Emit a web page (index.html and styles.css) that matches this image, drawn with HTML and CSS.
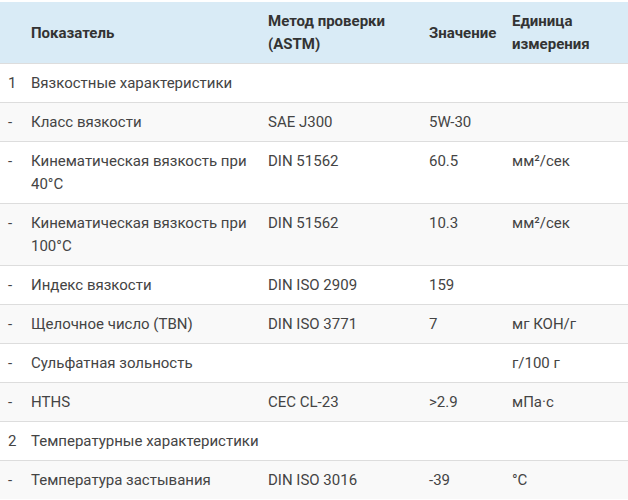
FILE: index.html
```html
<!DOCTYPE html>
<html lang="ru">
<head>
<meta charset="utf-8">
<title>Характеристики</title>
<link rel="stylesheet" href="styles.css">
</head>
<body>
<table class="spec">
  <colgroup>
    <col class="c-num">
    <col class="c-name">
    <col class="c-method">
    <col class="c-value">
    <col class="c-unit">
  </colgroup>
  <thead>
    <tr>
      <th></th>
      <th>Показатель</th>
      <th>Метод проверки (ASTM)</th>
      <th class="nowrap">Значение</th>
      <th>Единица измерения</th>
    </tr>
  </thead>
  <tbody>
    <tr><td>1</td><td colspan="4">Вязкостные характеристики</td></tr>
    <tr><td>-</td><td>Класс вязкости</td><td>SAE J300</td><td>5W-30</td><td></td></tr>
    <tr><td>-</td><td>Кинематическая вязкость при 40°C</td><td>DIN 51562</td><td>60.5</td><td>мм²/сек</td></tr>
    <tr><td>-</td><td>Кинематическая вязкость при 100°C</td><td>DIN 51562</td><td>10.3</td><td>мм²/сек</td></tr>
    <tr><td>-</td><td>Индекс вязкости</td><td>DIN ISO 2909</td><td>159</td><td></td></tr>
    <tr><td>-</td><td>Щелочное число (TBN)</td><td>DIN ISO 3771</td><td>7</td><td>мг КОН/г</td></tr>
    <tr><td>-</td><td>Сульфатная зольность</td><td></td><td></td><td>г/100 г</td></tr>
    <tr><td>-</td><td>HTHS</td><td>CEC CL-23</td><td>&gt;2.9</td><td>мПа·с</td></tr>
    <tr><td>2</td><td colspan="4">Температурные характеристики</td></tr>
    <tr><td>-</td><td>Температура застывания</td><td>DIN ISO 3016</td><td>-39</td><td>°C</td></tr>
  </tbody>
</table>
</body>
</html>
```
FILE: styles.css
```css
html, body {
  margin: 0;
  padding: 0;
  background: #fff;
}
body {
  padding-top: 2px;
  font-family: Roboto, "Liberation Sans", sans-serif;
  font-size: 15px;
  line-height: 23px;
  color: #444;
}
.spec {
  width: 628px;
  border-collapse: collapse;
  table-layout: fixed;
}
.c-num { width: 23px; }
.c-name { width: 237px; }
.c-method { width: 161px; }
.c-value { width: 83px; }
.c-unit { width: 124px; }
.spec th {
  background: #d9ebf6;
  color: #333;
  font-weight: 700;
  text-align: left;
  vertical-align: middle;
  padding: 8px 8px 7px;
}
.spec td {
  padding: 8px 8px 7px;
  vertical-align: top;
  border-top: 1px solid #ddd;
}
.spec th:first-child,
.spec td:first-child {
  padding-right: 0;
}
.spec tbody tr:nth-child(even) td {
  background: #f9f9f9;
}
.nowrap {
  white-space: nowrap;
}
```
